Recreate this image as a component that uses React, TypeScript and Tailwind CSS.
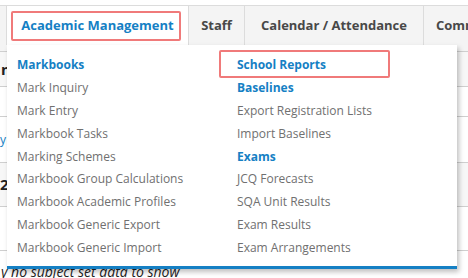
import React from 'react';

const leftColumn: { label: string; header?: boolean }[] = [
  { label: 'Markbooks', header: true },
  { label: 'Mark Inquiry' },
  { label: 'Mark Entry' },
  { label: 'Markbook Tasks' },
  { label: 'Marking Schemes' },
  { label: 'Markbook Group Calculations' },
  { label: 'Markbook Academic Profiles' },
  { label: 'Markbook Generic Export' },
  { label: 'Markbook Generic Import' },
];

const rightColumn: { label: string; header?: boolean }[] = [
  { label: 'School Reports', header: true },
  { label: 'Baselines', header: true },
  { label: 'Export Registration Lists' },
  { label: 'Import Baselines' },
  { label: 'Exams', header: true },
  { label: 'JCQ Forecasts' },
  { label: 'SQA Unit Results' },
  { label: 'Exam Results' },
  { label: 'Exam Arrangements' },
];

const MenuItem = ({ label, header }: { label: string; header?: boolean }) => (
  <div
    className={`h-[22.9px] leading-[22.9px] whitespace-nowrap ${
      header ? 'font-bold text-[#1580c4]' : 'text-[#707070]'
    }`}
  >
    {label}
  </div>
);

const App: React.FC = () => {
  return (
    <div
      className="relative w-[468px] h-[278px] overflow-hidden bg-white text-[12px]"
      style={{ fontFamily: '"Open Sans", "DejaVu Sans", sans-serif' }}
    >
      <div className="h-[5px] bg-white" />
      {/* top nav */}
      <div className="flex h-[40px] border-t border-[#dcdcdc] bg-[#f4f4f4] text-[13px] font-bold text-[#484848] whitespace-nowrap">
        <div className="w-[7px] shrink-0 border-r border-[#dcdcdc]" />
        <div className="relative flex w-[182px] shrink-0 items-center justify-center border-r border-[#dcdcdc] bg-white text-[#1580c4]">
          <div className="absolute left-[4px] top-[5px] h-[30px] w-[170px] rounded-[2px] border-2 border-[#f07a7a]" />
          Academic Management
        </div>
        <div className="flex w-[56px] shrink-0 items-center justify-center border-r border-[#dcdcdc]">Staff</div>
        <div className="flex w-[179px] shrink-0 items-center justify-center border-r border-[#dcdcdc]">
          Calendar / Attendance
        </div>
        <div className="flex shrink-0 items-center pl-[12px]">Communication</div>
      </div>

      {/* page content behind the menu */}
      <div className="text-[#222]">
        <div className="h-[7px] border-b border-[#cfcfcf] bg-[#f4f4f4]" />
        <div className="flex h-[35px] items-center border-b border-[#cfcfcf] bg-[#f7f7f7] pl-[1px] font-bold text-[15px]">
          n
        </div>
        <div className="h-[30px] border-b border-[#cfcfcf]" />
        <div className="flex h-[46px] items-center border-b border-[#cfcfcf] text-[#1580c4]">y</div>
        <div className="flex h-[44px] items-center border-b border-[#cfcfcf] bg-[#f7f7f7] font-bold text-[15px]">
          2
        </div>
        <div className="h-[44px] border-b border-[#cfcfcf]" />
        <div className="pl-[1px] pt-[14px] italic text-[14px] leading-none whitespace-nowrap">
          y no subject set data to show
        </div>
      </div>

      {/* dropdown menu */}
      <div className="absolute left-[7px] top-[45px] flex h-[224px] w-[450px] border-b-[3px] border-[#1580c4] bg-white pt-[9px] shadow-[2px_3px_5px_rgba(0,0,0,0.25)]">
        <div className="w-[220px] pl-[10px]">
          {leftColumn.map((item) => (
            <MenuItem key={item.label} {...item} />
          ))}
        </div>
        <div className="relative pl-[10px]">
          <div className="absolute -left-[8px] top-[-4px] h-[28px] w-[171px] rounded-[2px] border-2 border-[#f07a7a]" />
          {rightColumn.map((item) => (
            <MenuItem key={item.label} {...item} />
          ))}
        </div>
      </div>
    </div>
  );
};

export default App;
